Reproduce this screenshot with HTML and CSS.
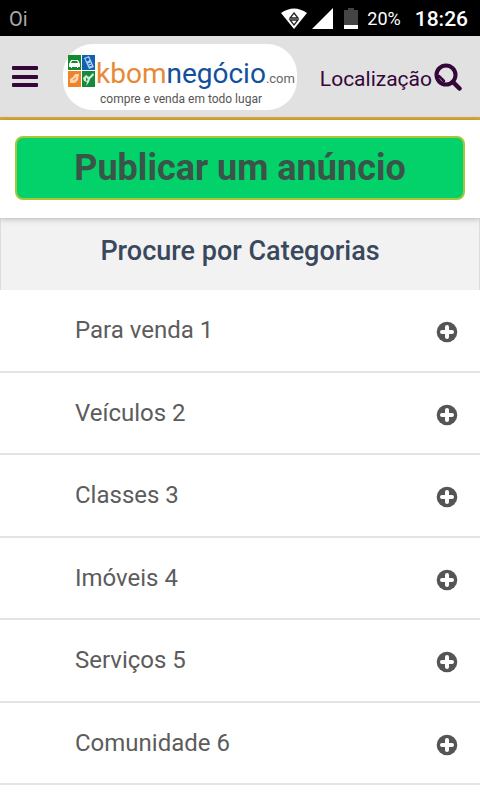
FILE: index.html
```html
<!DOCTYPE html>
<html lang="pt">
<head>
    <meta charset="utf-8">
    <meta name="viewport" content="width=device-width, initial-scale=1">
    <title>kbomnegócio.com</title>
    <link rel="stylesheet" href="styles.css">
</head>
<body>
    <div class="status-bar">
        <span class="carrier">Oi</span>
        <svg class="wifi" width="28" height="22" viewBox="0 0 28 22">
            <path d="M1 5Q14-4 27 5L14 21Z" fill="#fff"/>
            <path d="M14 5L18 10H10ZM10 12H18L14 17Z" fill="#fff" stroke="#222" stroke-width="1.3"/>
        </svg>
        <svg class="signal" width="22" height="22" viewBox="0 0 22 22">
            <path d="M21 0V21H0Z" fill="#fff"/>
        </svg>
        <svg class="battery" width="14" height="22" viewBox="0 0 14 22">
            <path d="M0 2H4V0H10V2H14V17H0Z" fill="#444"/>
            <path d="M0 17H14V21H0Z" fill="#fff"/>
        </svg>
        <span class="percent">20%</span>
        <span class="clock">18:26</span>
    </div>

    <header class="header">
        <button class="menu-button" type="button" aria-label="Menu">
            <svg width="26" height="22" viewBox="0 0 26 22" fill="#34063a">
                <rect width="26" height="4" rx="1"/>
                <rect y="9" width="26" height="4" rx="1"/>
                <rect y="17" width="26" height="4" rx="1"/>
            </svg>
        </button>
        <a class="logo" href="#">
            <span class="logo-main">
                <svg width="27" height="32" viewBox="0 0 27 32">
                    <path d="M0 0H13V15H0Z" fill="#128a2e"/>
                    <path d="M14 0H27V15H14Z" fill="#1261b0"/>
                    <path d="M0 16H13V32H0Z" fill="#f08229"/>
                    <path d="M14 16H27V32H14Z" fill="#168a3c"/>
                    <path d="M1 9L3 5H10L12 9V12H10V13H9V12H4V13H3V12H1ZM4 6L3 8H10L9 6Z" fill="#fff" fill-rule="evenodd"/>
                    <path d="M16 3L21 1L26 12L21 14Z" fill="#a9cdf0"/>
                    <path d="M18 4L20 3L21 5L19 6ZM20 9L23 8M21 11L24 10" fill="#1261b0" stroke="#1261b0"/>
                    <path d="M2 24L5 22L7 19H11L10 25L7 28H2Z" fill="#fbd3ae"/>
                    <path d="M5 25L8 23" stroke="#f08229"/>
                    <path d="M15 23L18 20L21 22L25 18L26 20L22 24L21 27L18 31L19 27L16 26Z" fill="#d3efd5"/>
                    <path d="M18 22L20 25L18 26Z" fill="#168a3c"/>
                </svg>
                <span class="logo-kbom">kbom</span><span class="logo-negocio">negócio</span><span class="logo-com">.com</span>
            </span>
            <span class="logo-slogan">compre e venda em todo lugar</span>
        </a>
        <a class="location" href="#">Localização</a>
        <button class="search-button" type="button" aria-label="Pesquisar">
            <svg width="28" height="28" viewBox="0 0 28 28" fill="none" stroke="#34063a" stroke-linecap="round">
                <circle cx="12" cy="12" r="9.5" stroke-width="4"/>
                <path d="M19 19L25.5 25.5" stroke-width="4.5"/>
                <path d="M5 13L10 18" stroke-width="2.5"/>
            </svg>
        </button>
    </header>

    <section class="publish">
        <a class="publish-button" href="#">Publicar um anúncio</a>
    </section>

    <main>
        <h2 class="categories-title">Procure por Categorias</h2>
        <svg class="symbols" width="0" height="0">
            <symbol id="plus" viewBox="0 0 22 22">
                <circle cx="11" cy="11" r="10.3" fill="#555"/>
                <path d="M11 6V16M6 11H16" stroke="#fff" stroke-width="4" stroke-linecap="round"/>
            </symbol>
        </svg>
        <ul class="categories">
            <li><button type="button">Para venda 1<svg><use href="#plus"/></svg></button></li>
            <li><button type="button">Veículos 2<svg><use href="#plus"/></svg></button></li>
            <li><button type="button">Classes 3<svg><use href="#plus"/></svg></button></li>
            <li><button type="button">Imóveis 4<svg><use href="#plus"/></svg></button></li>
            <li><button type="button">Serviços 5<svg><use href="#plus"/></svg></button></li>
            <li><button type="button">Comunidade 6<svg><use href="#plus"/></svg></button></li>
        </ul>
    </main>
</body>
</html>
```

FILE: styles.css
```css
* {
    box-sizing: border-box;
}
body {
    margin: 0;
    background: #fff;
    font-family: Roboto, Arial, sans-serif;
    color: #5c5c5c;
}
button {
    padding: 0;
    border: none;
    background: none;
    font: inherit;
    color: inherit;
    cursor: pointer;
}
a {
    color: inherit;
    text-decoration: none;
}
svg {
    display: block;
    flex: none;
}
.status-bar {
    display: flex;
    align-items: center;
    height: 36px;
    padding: 1px 12px 0 9px;
    background: #000;
    color: #fff;
}
.carrier {
    flex: 1;
    font-size: 20px;
    color: #aaa;
}
.signal {
    margin-left: 4px;
}
.battery {
    margin-left: 10px;
}
.percent {
    margin-left: 9px;
    font-size: 18px;
}
.clock {
    margin-left: 14px;
    font-size: 21px;
    font-weight: 500;
}
.header {
    display: flex;
    align-items: center;
    height: 84px;
    padding: 0 18px 0 12px;
    border-bottom: 3px solid #d9ab35;
    background: #e1e1e1;
    color: #34063a;
}
.logo {
    width: 234px;
    height: 66px;
    margin-left: 25px;
    padding: 8px 0 0 5px;
    border-radius: 30px;
    background: #fff;
    white-space: nowrap;
}
.logo-main {
    display: flex;
    align-items: baseline;
    height: 38px;
    font-size: 28px;
    line-height: 44px;
}
.logo-main svg {
    align-self: center;
    margin-right: 1px;
}
.logo-kbom {
    color: #e78a35;
}
.logo-negocio {
    color: #12509a;
}
.logo-com {
    font-size: 13px;
    color: #666;
}
.logo-slogan {
    display: block;
    padding-left: 32px;
    font-size: 12px;
    line-height: 18px;
    color: #555;
}
.location {
    margin-left: auto;
    padding-top: 4px;
    font-size: 21px;
}
.search-button {
    margin-left: 2px;
}
.publish {
    position: relative;
    padding: 16px 15px 18px;
    background: #fff;
    box-shadow: 0 1px 6px rgba(0, 0, 0, 0.25);
}
.publish-button {
    display: block;
    border: 2px solid #a5c83a;
    border-radius: 8px;
    background: #03d26b;
    font-size: 36px;
    font-weight: bold;
    line-height: 60px;
    text-align: center;
    color: #3b5449;
}
.categories-title {
    margin: 0;
    padding: 13px 0 18px;
    border: 1px solid #ddd;
    border-width: 0 1px;
    background: #f2f2f2;
    font-size: 27px;
    font-weight: 500;
    line-height: 41px;
    text-align: center;
    color: #39485c;
}
.symbols {
    position: absolute;
}
.categories {
    display: grid;
    grid-auto-rows: 1fr;
    min-height: 495px;
    margin: 0;
    padding: 0;
    list-style: none;
}
.categories li {
    display: flex;
    border-bottom: 2px solid #e4e4e4;
}
.categories button {
    display: flex;
    flex: 1;
    align-items: center;
    justify-content: space-between;
    padding: 0 22px 0 75px;
    font-size: 24px;
}
.categories svg {
    width: 22px;
    height: 22px;
    margin-top: 4px;
}
```
